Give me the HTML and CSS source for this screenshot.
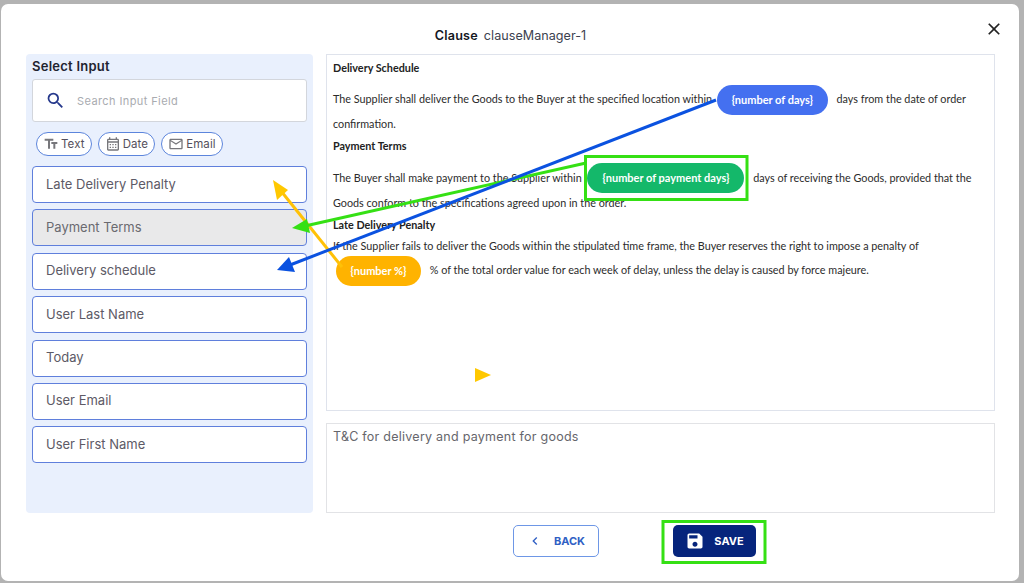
FILE: index.html
```html
<!DOCTYPE html>
<html lang="en">
<head>
<meta charset="utf-8">
<title>Clause</title>
<link rel="stylesheet" href="styles.css">
</head>
<body>
<div class="modal">
  <header class="modal-head">
    <div class="modal-title"><strong>Clause</strong><span>clauseManager-1</span></div>
    <button class="close" aria-label="Close"><svg viewBox="0 0 24 24"><path d="M19 6.41 17.59 5 12 10.59 6.41 5 5 6.41 10.59 12 5 17.59 6.41 19 12 13.41 17.59 19 19 17.59 13.41 12z"/></svg></button>
  </header>
  <div class="modal-body">
    <aside class="panel">
      <h2 class="panel-title">Select Input</h2>
      <div class="search">
        <svg viewBox="0 0 24 24"><path d="M15.5 14h-.79l-.28-.27A6.471 6.471 0 0 0 16 9.5 6.5 6.5 0 1 0 9.5 16c1.61 0 3.09-.59 4.23-1.57l.27.28v.79l5 4.99L20.49 19l-4.99-5zm-6 0C7.01 14 5 11.99 5 9.5S7.01 5 9.5 5 14 7.01 14 9.5 11.99 14 9.5 14z"/></svg>
        <span>Search Input Field</span>
      </div>
      <div class="chips">
        <span class="chip"><svg viewBox="0 0 24 24"><path d="M2.5 4v3h5v12h3V7h5V4h-13zm19 5h-9v3h3v7h3v-7h3V9z"/></svg>Text</span>
        <span class="chip"><svg viewBox="0 0 24 24"><path d="M19 4h-1V2h-2v2H8V2H6v2H5c-1.1 0-2 .9-2 2v14c0 1.1.9 2 2 2h14c1.1 0 2-.9 2-2V6c0-1.1-.9-2-2-2zm0 16H5V10h14v10zM5 8V6h14v2H5zm2 4h2v2H7zm4 0h2v2h-2zm4 0h2v2h-2zm-8 4h2v2H7zm4 0h2v2h-2zm4 0h2v2h-2z"/></svg>Date</span>
        <span class="chip"><svg viewBox="0 0 24 24"><path d="M20 4H4c-1.1 0-1.99.9-1.99 2L2 18c0 1.1.9 2 2 2h16c1.1 0 2-.9 2-2V6c0-1.1-.9-2-2-2zm0 14H4V8l8 5 8-5v10zm-8-7L4 6h16l-8 5z"/></svg>Email</span>
      </div>
      <ul class="fields">
        <li class="field">Late Delivery Penalty</li>
        <li class="field is-active">Payment Terms</li>
        <li class="field">Delivery schedule</li>
        <li class="field">User Last Name</li>
        <li class="field">Today</li>
        <li class="field">User Email</li>
        <li class="field">User First Name</li>
      </ul>
    </aside>
    <main class="main">
      <section class="editor">
        <h3>Delivery Schedule</h3>
        <p class="gap">The Supplier shall deliver the Goods to the Buyer at the specified location within <span class="pill pill-blue">{number of days}</span> days from the date of order confirmation.</p>
        <h3>Payment Terms</h3>
        <p class="gap gap-wide">The Buyer shall make payment to the Supplier within <span class="pill pill-green">{number of payment days}</span> days of receiving the Goods, provided that the Goods conform to the specifications agreed upon in the order.</p>
        <h3>Late Delivery Penalty</h3>
        <p class="tight">If the Supplier fails to deliver the Goods within the stipulated time frame, the Buyer reserves the right to impose a penalty of <br><span class="pill pill-yellow">{number %}</span> % of the total order value for each week of delay, unless the delay is caused by force majeure.</p>
      </section>
      <div class="description">T&amp;C for delivery and payment for goods</div>
    </main>
  </div>
  <footer class="modal-foot">
    <button class="btn btn-back"><svg viewBox="0 0 24 24"><path d="M15.41 7.41 14 6l-6 6 6 6 1.41-1.41L10.83 12z"/></svg>BACK</button>
    <button class="btn btn-save"><svg viewBox="0 0 24 24"><path d="M17 3H5c-1.11 0-2 .9-2 2v14c0 1.1.89 2 2 2h14c1.1 0 2-.9 2-2V7l-4-4zm-5 16c-1.66 0-3-1.34-3-3s1.34-3 3-3 3 1.34 3 3-1.34 3-3 3zm3-10H5V5h10v4z"/></svg>SAVE</button>
  </footer>
</div>
<svg class="annotations" viewBox="0 0 1024 583" aria-hidden="true">
  <rect x="585.5" y="156.5" width="161.5" height="43" fill="none" stroke="#35e014" stroke-width="3"/>
  <rect x="663" y="521.5" width="102" height="41" fill="none" stroke="#35e014" stroke-width="3"/>
  <line x1="342" y1="267" x2="281" y2="191" stroke="#ffc107" stroke-width="3"/>
  <polygon points="273,180 288,190 277,200" fill="#ffc800"/>
  <line x1="586" y1="163" x2="305" y2="226" stroke="#35e014" stroke-width="3"/>
  <polygon points="292,228 307,219 310,233" fill="#35e014"/>
  <line x1="716" y1="100" x2="290" y2="265" stroke="#0b52e0" stroke-width="3"/>
  <polygon points="277,270 289,257 295,272" fill="#0b52e0"/>
  <polygon points="475,368 491,375 475,382" fill="#ffc800"/>
</svg>
</body>
</html>
```

FILE: styles.css
```css
* { box-sizing: border-box; }
html, body { height: 100%; }
body {
  margin: 0;
  padding: 4px 5px 2px 1px;
  background: #b3b3b3;
  overflow: hidden;
  position: relative;
  font-family: "Inter", "Noto Sans", sans-serif;
}
.modal {
  height: 577px;
  background: #fff;
  border-radius: 7px;
  padding: 0 24px 0 25px;
  display: flex;
  flex-direction: column;
}
.modal-head {
  height: 50px;
  position: relative;
  display: flex;
  align-items: center;
  justify-content: center;
  padding-top: 12px;
}
.modal-title { font-size: 12.6px; letter-spacing: .03px; color: #3c4250; display: flex; gap: 6px; }
.modal-title strong { font-weight: 600; letter-spacing: .2px; color: #14181f; }
.close {
  position: absolute;
  right: -9px;
  top: 15px;
  width: 20px;
  height: 20px;
  padding: 0;
  border: 0;
  background: none;
}
.close svg { width: 20px; height: 20px; fill: #222; display: block; }
.modal-body { display: flex; gap: 13px; height: 459px; }
.panel {
  width: 287px;
  background: #e9f0fd;
  border-radius: 4px;
  padding: 4px 6px 0;
}
.panel-title {
  margin: 0;
  height: 21px;
  font-size: 13px;
  line-height: 17px;
  font-weight: 600;
  letter-spacing: .25px;
  color: #1f2430;
}
.search {
  height: 43px;
  background: #fff;
  border: 1px solid #d3d6dc;
  border-radius: 3px;
  display: flex;
  align-items: center;
  padding-left: 12px;
  gap: 11px;
  font-size: 11px;
  letter-spacing: .4px;
  color: #a9abb0;
}
.search svg { width: 21px; height: 21px; fill: #26398c; }
.chips { display: flex; gap: 6px; margin: 10px 0 10px 4px; }
.chip {
  height: 24px;
  border: 1px solid #5c85dc;
  border-radius: 12px;
  padding: 0 6px;
  display: flex;
  align-items: center;
  gap: 2px;
  background: #fff;
  font-size: 11.5px;
  letter-spacing: .1px;
  color: #55505c;
}
.chip svg { width: 16px; height: 16px; fill: #77777b; }
.fields {
  list-style: none;
  margin: 0;
  padding: 0;
  display: flex;
  flex-direction: column;
  gap: 6.4px;
}
.field {
  height: 37px;
  border: 1px solid #5f7fdc;
  border-radius: 4px;
  background: #fff;
  padding: 0 0 2px 13px;
  display: flex;
  align-items: center;
  font-size: 13px;
  color: #5d5a66;
}
.field.is-active { background: #e9e9ea; color: #6a6a70; }
.main { width: 669px; display: flex; flex-direction: column; gap: 12px; }
.editor {
  height: 357px;
  border: 1px solid #dfe3ec;
  padding: 3px 6px 0;
  font-family: "Lato", "Open Sans", sans-serif;
  font-size: 10.8px;
  color: #2b2b2b;
}
.editor h3 { margin: 0; font-size: 10.8px; line-height: 20px; font-weight: 700; color: #222; }
.editor p { margin: 0; line-height: 25px; }
.editor p.gap { margin-top: 7.5px; }
.editor p.gap-wide { margin-top: 9px; }
.editor p.tight { line-height: 24px; margin-top: -1px; }
.pill {
  display: inline-block;
  height: 30px;
  line-height: 29px;
  margin: -5px 6px -5px 2px;
  vertical-align: middle;
  border-radius: 15px;
  color: #fff;
  font-size: 11px;
  font-weight: 700;
  text-align: center;
}
.pill-blue { width: 111px; background: #4470f0; }
.pill-green { width: 157px; background: #14b86a; margin: -6px 6px -4px 3px; }
.pill-yellow { width: 85px; background: #ffb300; margin-left: 3px; }
.description {
  height: 90px;
  border: 1px solid #e2e3e6;
  padding: 5px 6px;
  font-size: 12.5px;
  letter-spacing: .25px;
  color: #66666c;
}
.modal-foot {
  display: flex;
  gap: 74px;
  padding: 12px 0 0 487px;
}
.btn {
  height: 32px;
  border-radius: 5px;
  display: flex;
  align-items: center;
  justify-content: center;
  font-family: inherit;
  font-size: 11px;
  font-weight: 700;
  padding: 0;
}
.btn svg { fill: currentColor; }
.btn-back {
  width: 86px;
  gap: 11px;
  background: #fff;
  border: 1px solid #6e97e6;
  color: #2f5fc4;
}
.btn-back svg { width: 16px; height: 16px; }
.btn-save {
  width: 83px;
  gap: 9px;
  border: 0;
  background: #06247c;
  color: #fff;
}
.btn-save svg { width: 20px; height: 20px; }
.annotations {
  position: absolute;
  left: 0;
  top: 0;
  width: 1024px;
  height: 583px;
  pointer-events: none;
}
```
